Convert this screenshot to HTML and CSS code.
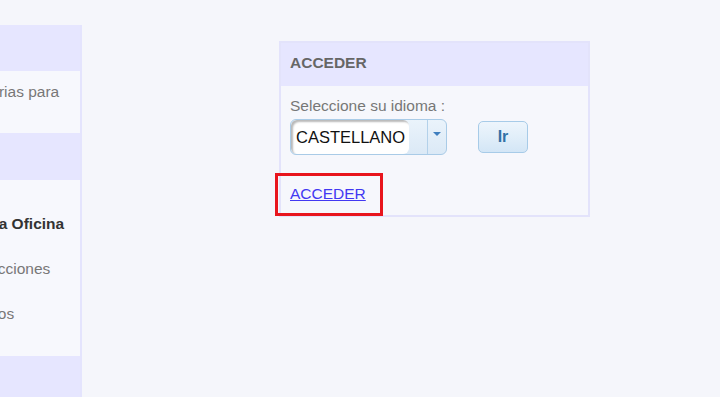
FILE: index.html
```html
<!DOCTYPE html>
<html lang="es">
<head>
<meta charset="utf-8">
<title>Acceder</title>
<link rel="stylesheet" href="styles.css">
</head>
<body>
<div class="page">
  <aside class="sidebar">
    <div class="side-inner">
      <div class="side-head"></div>
      <p class="intro">Las gestiones necesarias para usted.</p>
      <div class="side-head second"></div>
      <ul class="menu">
        <li class="menu-item strong">Acceso a la Oficina</li>
        <li class="menu-item">Mis Transacciones</li>
        <li class="menu-item">Mis Favoritos</li>
      </ul>
      <div class="side-head last"></div>
    </div>
  </aside>
  <main class="main">
    <section class="login-box">
      <h2 class="box-head">ACCEDER</h2>
      <div class="box-body">
        <label class="lang-label">Seleccione su idioma :</label>
        <div class="lang-row">
          <div class="select">
            <span class="select-value">CASTELLANO</span>
            <span class="select-gap"></span>
            <span class="select-btn">
              <svg class="arrow" width="8" height="4" viewBox="0 0 8 4"><polygon points="0,0 8,0 4,4" fill="#3f7fbf"/></svg>
            </span>
          </div>
          <button class="go-btn" type="button">Ir</button>
        </div>
        <div class="link-row">
          <a class="access-link" href="#">ACCEDER</a>
        </div>
      </div>
    </section>
  </main>
</div>
</body>
</html>
```
FILE: styles.css
```css
html, body {
  margin: 0;
  padding: 0;
}
body {
  background: #f5f6fb;
  font-family: "Liberation Sans", Arial, sans-serif;
  font-size: 15.5px;
  height: 397px;
  overflow: hidden;
}
.page {
  display: flex;
  align-items: flex-start;
}
.sidebar {
  margin-top: 25px;
  width: 80px;
  border-right: 2px solid #e4e4fd;
  background: #f7f8fd;
  overflow: hidden;
  display: flex;
  justify-content: flex-end;
  flex: none;
}
.side-inner {
  flex: none;
  width: 158px;
}
.side-head {
  height: 46px;
  background: #e6e6ff;
}
.side-head.second {
  height: 47px;
}
.side-head.last {
  height: 60px;
}
.intro {
  margin: 0;
  padding: 11px 0 11px;
  line-height: 20px;
  color: #777;
  text-indent: -73px;
}
.menu {
  list-style: none;
  margin: 0;
  padding: 21px 0 20px;
}
.menu-item {
  height: 45px;
  line-height: 45px;
  white-space: nowrap;
  color: #777;
}
.menu-item.strong {
  font-weight: bold;
  color: #333;
}
.main {
  padding: 41px 0 0 197px;
}
.login-box {
  width: 311px;
  box-sizing: border-box;
  border: 2px solid #e3e3fb;
  background: #f6f7fc;
}
.box-head {
  margin: 0;
  height: 43px;
  line-height: 40px;
  padding-left: 9px;
  background: #e6e6ff;
  color: #666;
  font-size: 15.5px;
  font-weight: bold;
}
.box-body {
  padding: 11px 9px 12px;
}
.lang-label {
  display: block;
  line-height: 18px;
  color: #777;
}
.lang-row {
  margin-top: 4px;
  display: flex;
  align-items: center;
  gap: 31px;
}
.select {
  width: 157px;
  height: 36px;
  box-sizing: border-box;
  border: 1px solid #a9cbe7;
  border-radius: 6px;
  background: linear-gradient(#eaf3fb, #dbe9f6);
  display: flex;
  overflow: hidden;
}
.select-value {
  width: 118px;
  flex: none;
  box-sizing: border-box;
  background: #fff;
  border-radius: 6px;
  box-shadow: inset 2px 2px 2px rgba(0, 0, 0, 0.28);
  padding-left: 5px;
  line-height: 34px;
  font-size: 16.5px;
  color: #111;
  white-space: nowrap;
  overflow: hidden;
}
.select-gap {
  width: 18px;
  flex: none;
  border-right: 1px solid #b3d1ea;
}
.select-btn {
  flex: 1;
  display: flex;
  justify-content: center;
  align-items: flex-start;
  padding-top: 12px;
}
.arrow {
  display: block;
}
.go-btn {
  width: 50px;
  height: 32px;
  box-sizing: border-box;
  border: 1px solid #a7cbe8;
  border-radius: 5px;
  background: linear-gradient(#edf5fc 0%, #e1eef9 50%, #d3e6f6 100%);
  color: #3271a6;
  font-family: "Liberation Sans", Arial, sans-serif;
  font-size: 16px;
  font-weight: bold;
  padding: 0;
}
.link-row {
  margin-top: 30px;
  line-height: 18px;
}
.access-link {
  position: relative;
  display: inline-block;
  color: #4238f2;
  text-decoration: underline;
}
.access-link::after {
  content: "";
  position: absolute;
  top: -12px;
  left: -15px;
  right: -17px;
  bottom: -13px;
  border: 3px solid #e8151d;
}
```
